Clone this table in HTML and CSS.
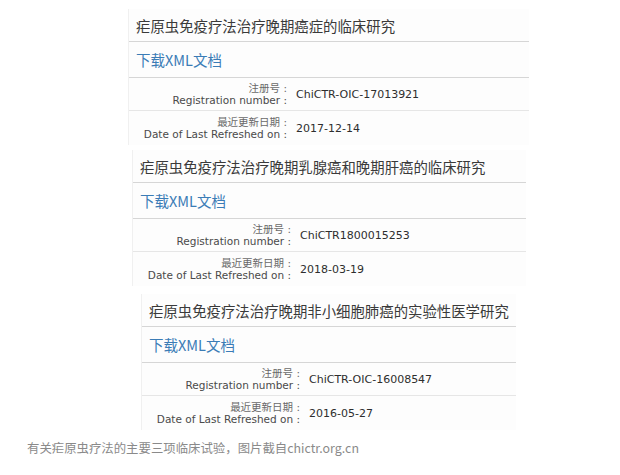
FILE: index.html
```html
<!DOCTYPE html>
<html lang="zh-CN">
<head>
<meta charset="utf-8">
<title>疟原虫疗法临床试验</title>
<link rel="stylesheet" href="styles.css">
</head>
<body>
<div class="page">
  <div class="block b1">
    <div class="title">疟原虫免疫疗法治疗晚期癌症的临床研究</div>
    <div class="link">下载XML文档</div>
    <div class="row">
      <div class="label"><span class="zh">注册号 :</span><span class="en">Registration number :</span></div>
      <div class="value">ChiCTR-OIC-17013921</div>
    </div>
    <div class="row last">
      <div class="label"><span class="zh">最近更新日期 :</span><span class="en">Date of Last Refreshed on :</span></div>
      <div class="value">2017-12-14</div>
    </div>
  </div>
  <div class="block b2">
    <div class="title">疟原虫免疫疗法治疗晚期乳腺癌和晚期肝癌的临床研究</div>
    <div class="link">下载XML文档</div>
    <div class="row">
      <div class="label"><span class="zh">注册号 :</span><span class="en">Registration number :</span></div>
      <div class="value">ChiCTR1800015253</div>
    </div>
    <div class="row last">
      <div class="label"><span class="zh">最近更新日期 :</span><span class="en">Date of Last Refreshed on :</span></div>
      <div class="value">2018-03-19</div>
    </div>
  </div>
  <div class="block b3">
    <div class="title">疟原虫免疫疗法治疗晚期非小细胞肺癌的实验性医学研究</div>
    <div class="link">下载XML文档</div>
    <div class="row">
      <div class="label"><span class="zh">注册号 :</span><span class="en">Registration number :</span></div>
      <div class="value">ChiCTR-OIC-16008547</div>
    </div>
    <div class="row last">
      <div class="label"><span class="zh">最近更新日期 :</span><span class="en">Date of Last Refreshed on :</span></div>
      <div class="value">2016-05-27</div>
    </div>
  </div>
  <p class="caption">有关疟原虫疗法的主要三项临床试验，图片截自chictr.org.cn</p>
</div>
</body>
</html>
```
FILE: styles.css
```css
html, body {
  margin: 0;
  padding: 0;
  background: #ffffff;
}
.page {
  padding-top: 9px;
  display: flex;
  flex-direction: column;
  align-items: flex-start;
}
.block {
  background: #fdfdfd;
  border-left: 1px solid #f0f0f0;
  box-sizing: border-box;
  display: flex;
  flex-direction: column;
}
.b1 { margin-left: 128px; width: 401px; }
.b2 { margin-left: 132px; width: 394px; margin-top: 5px; }
.b3 { margin-left: 141px; width: 375px; margin-top: 8px; }
.title {
  height: 33px;
  box-sizing: border-box;
  border-bottom: 1px solid #d6d6d6;
  padding-left: 7px;
  display: flex;
  align-items: center;
  font-family: "Noto Sans CJK SC", sans-serif;
  font-size: 14.4px;
  color: #3a3a3a;
  white-space: nowrap;
}
.link {
  height: 36px;
  box-sizing: border-box;
  border-bottom: 1px solid #d6d6d6;
  padding-left: 7px;
  display: flex;
  align-items: center;
  font-family: "Noto Sans CJK SC", sans-serif;
  font-size: 14.5px;
  color: #3b7cb6;
}
.row {
  height: 33px;
  box-sizing: border-box;
  border-bottom: 1px solid #e6e6e6;
  display: flex;
  align-items: center;
}
.row.last {
  height: 34px;
  border-bottom: none;
}
.label {
  width: 158px;
  display: flex;
  flex-direction: column;
  align-items: flex-end;
  font-family: "DejaVu Sans", sans-serif;
  font-size: 10.5px;
  line-height: 12px;
  color: #4a4a4a;
}
.label .zh {
  font-family: "DejaVu Sans", "Noto Sans CJK SC", sans-serif;
  color: #6a6a6a;
}
.value {
  margin-left: 9px;
  font-family: "DejaVu Sans", sans-serif;
  font-size: 11px;
  color: #2e2e2e;
}
.caption {
  margin: 9px 0 0 27px;
  font-family: "Noto Sans CJK SC", sans-serif;
  font-size: 12.4px;
  line-height: 18px;
  color: #8a8a8a;
}
```
